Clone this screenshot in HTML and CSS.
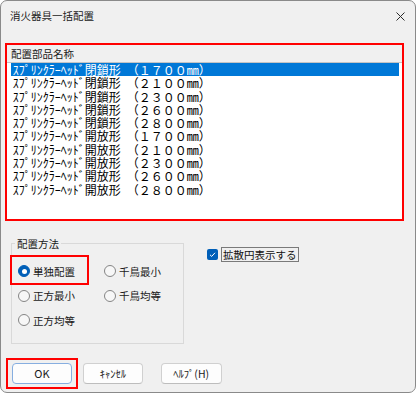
FILE: index.html
```html
<!DOCTYPE html>
<html lang="ja">
<head>
<meta charset="utf-8">
<title>消火器具一括配置</title>
<link rel="stylesheet" href="styles.css">
</head>
<body>
<div class="window">
  <div class="titlebar">
    <span class="title">消火器具一括配置</span>
    <svg class="close" width="9" height="9" viewBox="0 0 9 9"><path d="M0.5 0.5 L8.5 8.5 M8.5 0.5 L0.5 8.5" stroke="#2b2b2b" stroke-width="1" fill="none"/></svg>
  </div>
  <div class="content">
    <div class="list-mark">
      <div class="list">
        <div class="list-head">配置部品名称</div>
        <ul class="items">
          <li class="sel">ｽﾌﾟﾘﾝｸﾗｰﾍｯﾄﾞ閉鎖形 （１７００mm）</li>
          <li>ｽﾌﾟﾘﾝｸﾗｰﾍｯﾄﾞ閉鎖形 （２１００mm）</li>
          <li>ｽﾌﾟﾘﾝｸﾗｰﾍｯﾄﾞ閉鎖形 （２３００mm）</li>
          <li>ｽﾌﾟﾘﾝｸﾗｰﾍｯﾄﾞ閉鎖形 （２６００mm）</li>
          <li>ｽﾌﾟﾘﾝｸﾗｰﾍｯﾄﾞ閉鎖形 （２８００mm）</li>
          <li>ｽﾌﾟﾘﾝｸﾗｰﾍｯﾄﾞ開放形 （１７００mm）</li>
          <li>ｽﾌﾟﾘﾝｸﾗｰﾍｯﾄﾞ開放形 （２１００mm）</li>
          <li>ｽﾌﾟﾘﾝｸﾗｰﾍｯﾄﾞ開放形 （２３００mm）</li>
          <li>ｽﾌﾟﾘﾝｸﾗｰﾍｯﾄﾞ開放形 （２６００mm）</li>
          <li>ｽﾌﾟﾘﾝｸﾗｰﾍｯﾄﾞ開放形 （２８００mm）</li>
        </ul>
      </div>
    </div>

    <div class="middle">
      <fieldset class="group">
        <legend>配置方法</legend>
        <div class="radios">
          <div class="radio-mark"></div>
          <label class="opt"><span class="radio on"></span>単独配置</label>
          <label class="opt"><span class="radio"></span>千鳥最小</label>
          <label class="opt"><span class="radio"></span>正方最小</label>
          <label class="opt"><span class="radio"></span>千鳥均等</label>
          <label class="opt"><span class="radio"></span>正方均等</label>
        </div>
      </fieldset>
      <div class="check">
        <span class="cbox"><svg width="11" height="11" viewBox="0 0 11 11"><path d="M3 5.8 L4.7 7.4 L8 3.8" stroke="#fff" stroke-width="1" fill="none"/></svg></span>
        <span class="check-label">拡散円表示する</span>
      </div>
    </div>

    <div class="buttons">
      <div class="btn-mark"><button class="btn default">OK</button></div>
      <button class="btn cancel">ｷｬﾝｾﾙ</button>
      <button class="btn help">ﾍﾙﾌﾟ(H)</button>
    </div>
  </div>
</div>
</body>
</html>
```

FILE: styles.css
```css
* { box-sizing: border-box; }
html, body { margin: 0; padding: 0; background: #ffffff; }
body {
  font-family: "Noto Sans CJK JP", "Noto Sans", sans-serif;
  font-size: 10.5px;
  color: #1a1a1a;
}
.window {
  width: 416px;
  height: 393px;
  border: 1px solid #8a8a8a;
  border-radius: 7px;
  background: #f0f0f0;
  display: flex;
  flex-direction: column;
  overflow: hidden;
}
.titlebar {
  height: 30px;
  flex: none;
  display: flex;
  align-items: center;
  justify-content: space-between;
  padding: 0 10px 0 9px;
}
.title { line-height: 14px; color: #222; }
.close { display: block; }
.content {
  display: flex;
  flex-direction: column;
  padding: 12px 0 0 4px;
}
.list-mark {
  width: 399px;
  height: 178px;
  border: 2px solid #ff0000;
}
.list {
  height: 100%;
  background: #ffffff;
  display: flex;
  flex-direction: column;
}
.list-head {
  height: 18px;
  flex: none;
  background: #f0f0f0;
  border-bottom: 1px solid #c4c4c4;
  padding-left: 4px;
  line-height: 17px;
  color: #1a1a1a;
}
.items {
  list-style: none;
  margin: 0;
  padding: 0;
  font-family: "Noto Sans Mono CJK JP", "Noto Sans CJK JP", monospace;
  font-size: 12px;
}
.items li {
  height: 13.3px;
  line-height: 13.3px;
  margin: 0 3px 0 4px;
  padding-left: 1.7px;
  white-space: pre;
  color: #000;
}
.items li.sel { background: #0078d7; color: #ffffff; }

.middle {
  display: flex;
  align-items: flex-start;
  margin-top: 14.5px;
  padding-left: 6px;
}
.group {
  width: 173px;
  margin: 0;
  padding: 0;
  min-width: 0;
  border: 1px solid #d9d9d9;
}
.group legend {
  margin-left: 3px;
  padding: 0 2px;
  line-height: 15px;
  font-size: 10.5px;
}
.radios {
  position: relative;
  display: grid;
  grid-template-columns: 86px auto;
  grid-auto-rows: 24.5px;
  padding: 8.25px 0 11px 6px;
}
.opt {
  display: flex;
  align-items: center;
  gap: 3px;
}
.radio {
  width: 12px;
  height: 12px;
  flex: none;
  border-radius: 50%;
  border: 1px solid #858585;
  background: #f7f7f7;
  display: flex;
  align-items: center;
  justify-content: center;
}
.radio.on { background: #005fb8; border-color: #005fb8; }
.radio.on::after {
  content: "";
  width: 5px;
  height: 5px;
  border-radius: 50%;
  background: #ffffff;
}
.radio-mark {
  position: absolute;
  left: -2px;
  top: 4.5px;
  width: 79px;
  height: 30px;
  border: 2px solid #ff0000;
  pointer-events: none;
}
.check {
  display: flex;
  align-items: center;
  gap: 3px;
  height: 15px;
  margin: 11px 0 0 23px;
}
.cbox {
  width: 11px;
  height: 11px;
  border-radius: 2px;
  background: #005fb8;
  display: flex;
}
.check-label {
  border: 1px solid #7a7a7a;
  padding: 0 1px;
  line-height: 13px;
  color: #111;
}
.buttons {
  display: flex;
  align-items: center;
  margin-top: 13.75px;
  padding-left: 1px;
}
.btn-mark {
  border: 2px solid #ff0000;
  padding: 2.7px 3.7px;
  display: flex;
}
.btn {
  width: 60.6px;
  height: 21.3px;
  padding: 0;
  font-family: "Noto Sans CJK JP", "Noto Sans", sans-serif;
  font-size: 10.5px;
  color: #1a1a1a;
  background: #fdfdfd;
  border: 1px solid #d0d0d0;
  border-bottom-color: #bdbdbd;
  border-radius: 4px;
}
.btn.default { border-color: #86aee0; font-size: 11px; }
.btn.cancel { margin-left: 4.7px; }
.btn.help { margin-left: 17.7px; }
```
